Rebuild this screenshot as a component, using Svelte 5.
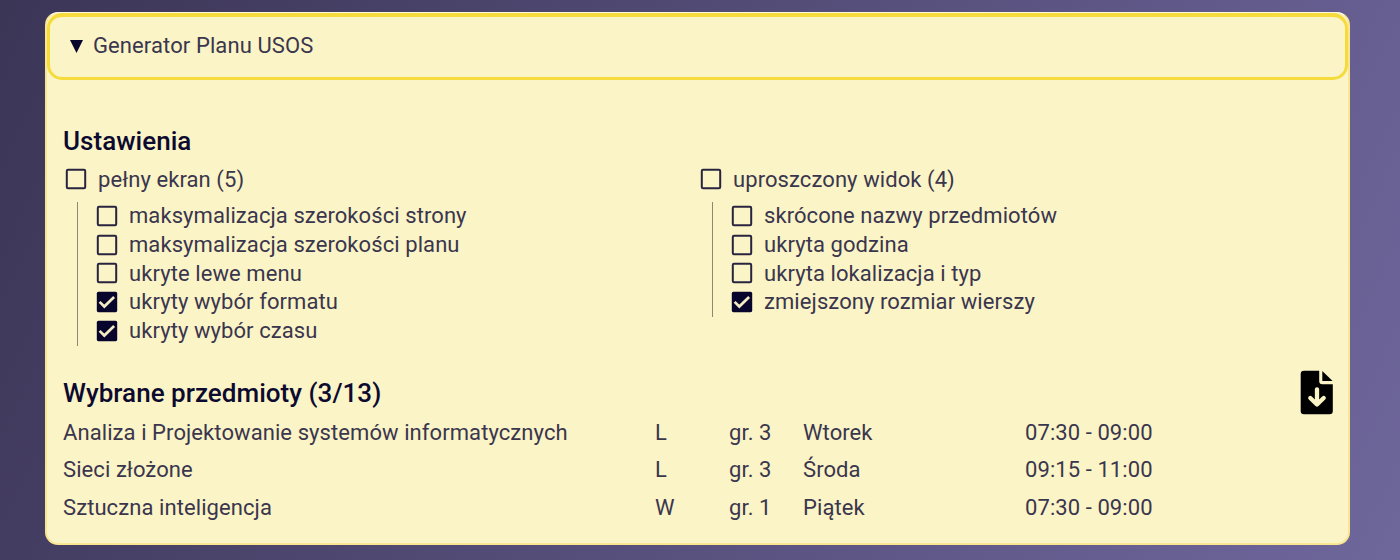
<script lang="ts">
  type Option = { label: string; checked: boolean };
  const groups: { title: string; options: Option[] }[] = [
    {
      title: 'pełny ekran (5)',
      options: [
        { label: 'maksymalizacja szerokości strony', checked: false },
        { label: 'maksymalizacja szerokości planu', checked: false },
        { label: 'ukryte lewe menu', checked: false },
        { label: 'ukryty wybór formatu', checked: true },
        { label: 'ukryty wybór czasu', checked: true },
      ],
    },
    {
      title: 'uproszczony widok (4)',
      options: [
        { label: 'skrócone nazwy przedmiotów', checked: false },
        { label: 'ukryta godzina', checked: false },
        { label: 'ukryta lokalizacja i typ', checked: false },
        { label: 'zmiejszony rozmiar wierszy', checked: true },
      ],
    },
  ];
  const subjects = [
    ['Analiza i Projektowanie systemów informatycznych', 'L', 'gr. 3', 'Wtorek', '07:30 - 09:00'],
    ['Sieci złożone', 'L', 'gr. 3', 'Środa', '09:15 - 11:00'],
    ['Sztuczna inteligencja', 'W', 'gr. 1', 'Piątek', '07:30 - 09:00'],
  ];
</script>

{#snippet box(checked: boolean)}
  <svg class="box" width="22" height="22" viewBox="0 0 22 22">
    {#if checked}
      <rect x="0.8" y="0.8" width="20.4" height="20.4" rx="1.6" fill="#08052d" />
      <path d="M3.6 10.9 8.3 15.5 18.1 6" fill="none" stroke="#f3ebc4" stroke-width="2.7" />
    {:else}
      <rect x="1.8" y="1.8" width="18.4" height="18.4" rx="1.2" fill="none" stroke="#28233f" stroke-width="2" />
    {/if}
  </svg>
{/snippet}

<div class="page">
  <main class="card">
    <header class="summary">
      <svg width="13" height="13" viewBox="0 0 13 13"><path d="M0 0H13L6.5 13Z" fill="#08052d" /></svg>
      <span>Generator Planu USOS</span>
    </header>
    <section class="settings">
      <h2>Ustawienia</h2>
      <div class="groups">
        {#each groups as group}
          <div class="group">
            <label class="parent">{@render box(false)}<span>{group.title}</span></label>
            <div class="children">
              {#each group.options as option}
                <label class="child">{@render box(option.checked)}<span>{option.label}</span></label>
              {/each}
            </div>
          </div>
        {/each}
      </div>
    </section>
    <section class="chosen">
      <div class="heading">
        <h2>Wybrane przedmioty (3/13)</h2>
        <svg class="download" width="34" height="45" viewBox="0 0 34 45">
          <path d="M4 .7H19.2V11.2Q19.2 14.2 22.2 14.2H32.8V41Q32.8 44.2 29.6 44.2H4Q.7 44.2 .7 41V4Q.7 .7 4 .7Z" fill="#000" />
          <path d="M22.3 .9 32.6 11.1H22.3Z" fill="#000" />
          <path d="M17 19.3V34M10.3 28 17 34.5 23.7 28" fill="none" stroke="#fbf4c7" stroke-width="4.3" stroke-linecap="round" stroke-linejoin="round" />
        </svg>
      </div>
      <div class="rows">
        {#each subjects as row}
          <div class="row">
            {#each row as cell}<span>{cell}</span>{/each}
          </div>
        {/each}
      </div>
    </section>
  </main>
</div>

<style>
  .page {
    box-sizing: border-box;
    width: 1400px;
    height: 560px;
    padding: 12px 50px 15px 45px;
    overflow: hidden;
    background: linear-gradient(115deg, #3b3556 0%, #6b6397 92%, #6e679a 100%);
    font: 22px/29px Roboto, sans-serif;
    color: #3a364d;
  }
  .card {
    box-sizing: border-box;
    height: 533px;
    background: #fbf4c7;
    border: 2px solid #fae591;
    border-top: 1px solid #fdf8e0;
    border-radius: 13px;
  }
  .summary {
    box-sizing: border-box;
    height: 67px;
    border: 3px solid #f5db3c;
    border-top-width: 4px;
    border-radius: 15px;
    display: flex;
    align-items: flex-start;
    gap: 10px;
    padding: 14px 0 0 20px;
    letter-spacing: 0.1px;
  }
  .summary svg { margin-top: 9px; }
  h2 {
    margin: 0;
    font-size: 26px;
    line-height: 32px;
    font-weight: 500;
    letter-spacing: 0.03px;
    color: #0d0a30;
  }
  .settings { padding: 45px 16px 0; height: 245px; }
  .groups { display: grid; grid-template-columns: 635px 1fr; margin-top: 8px; }
  .group span { letter-spacing: 0.08px; }
  label { display: flex; align-items: center; }
  .box { flex: none; margin-right: 11px; }
  .parent { height: 28px; padding-left: 2px; }
  .children {
    margin: 9px 0 0 14px;
    padding-left: 18px;
    border-left: 1.5px solid #8d8875;
  }
  .child { height: 28.8px; }
  .child .box { margin-top: -1px; }
  .child span { margin-top: -1.8px; }
  .heading { display: flex; justify-content: space-between; height: 44px; padding: 0 14px 0 16px; }
  .heading h2 { padding-top: 7px; }
  .rows { padding-left: 16px; margin-top: -1px; }
  .row {
    display: grid;
    grid-template-columns: 592px 74px 74px 222px 1fr;
    align-items: center;
    height: 38px;
    letter-spacing: 0.08px;
  }
  .row:nth-child(2) { height: 37px; }
  .row:nth-child(3) { height: 39px; }
</style>
